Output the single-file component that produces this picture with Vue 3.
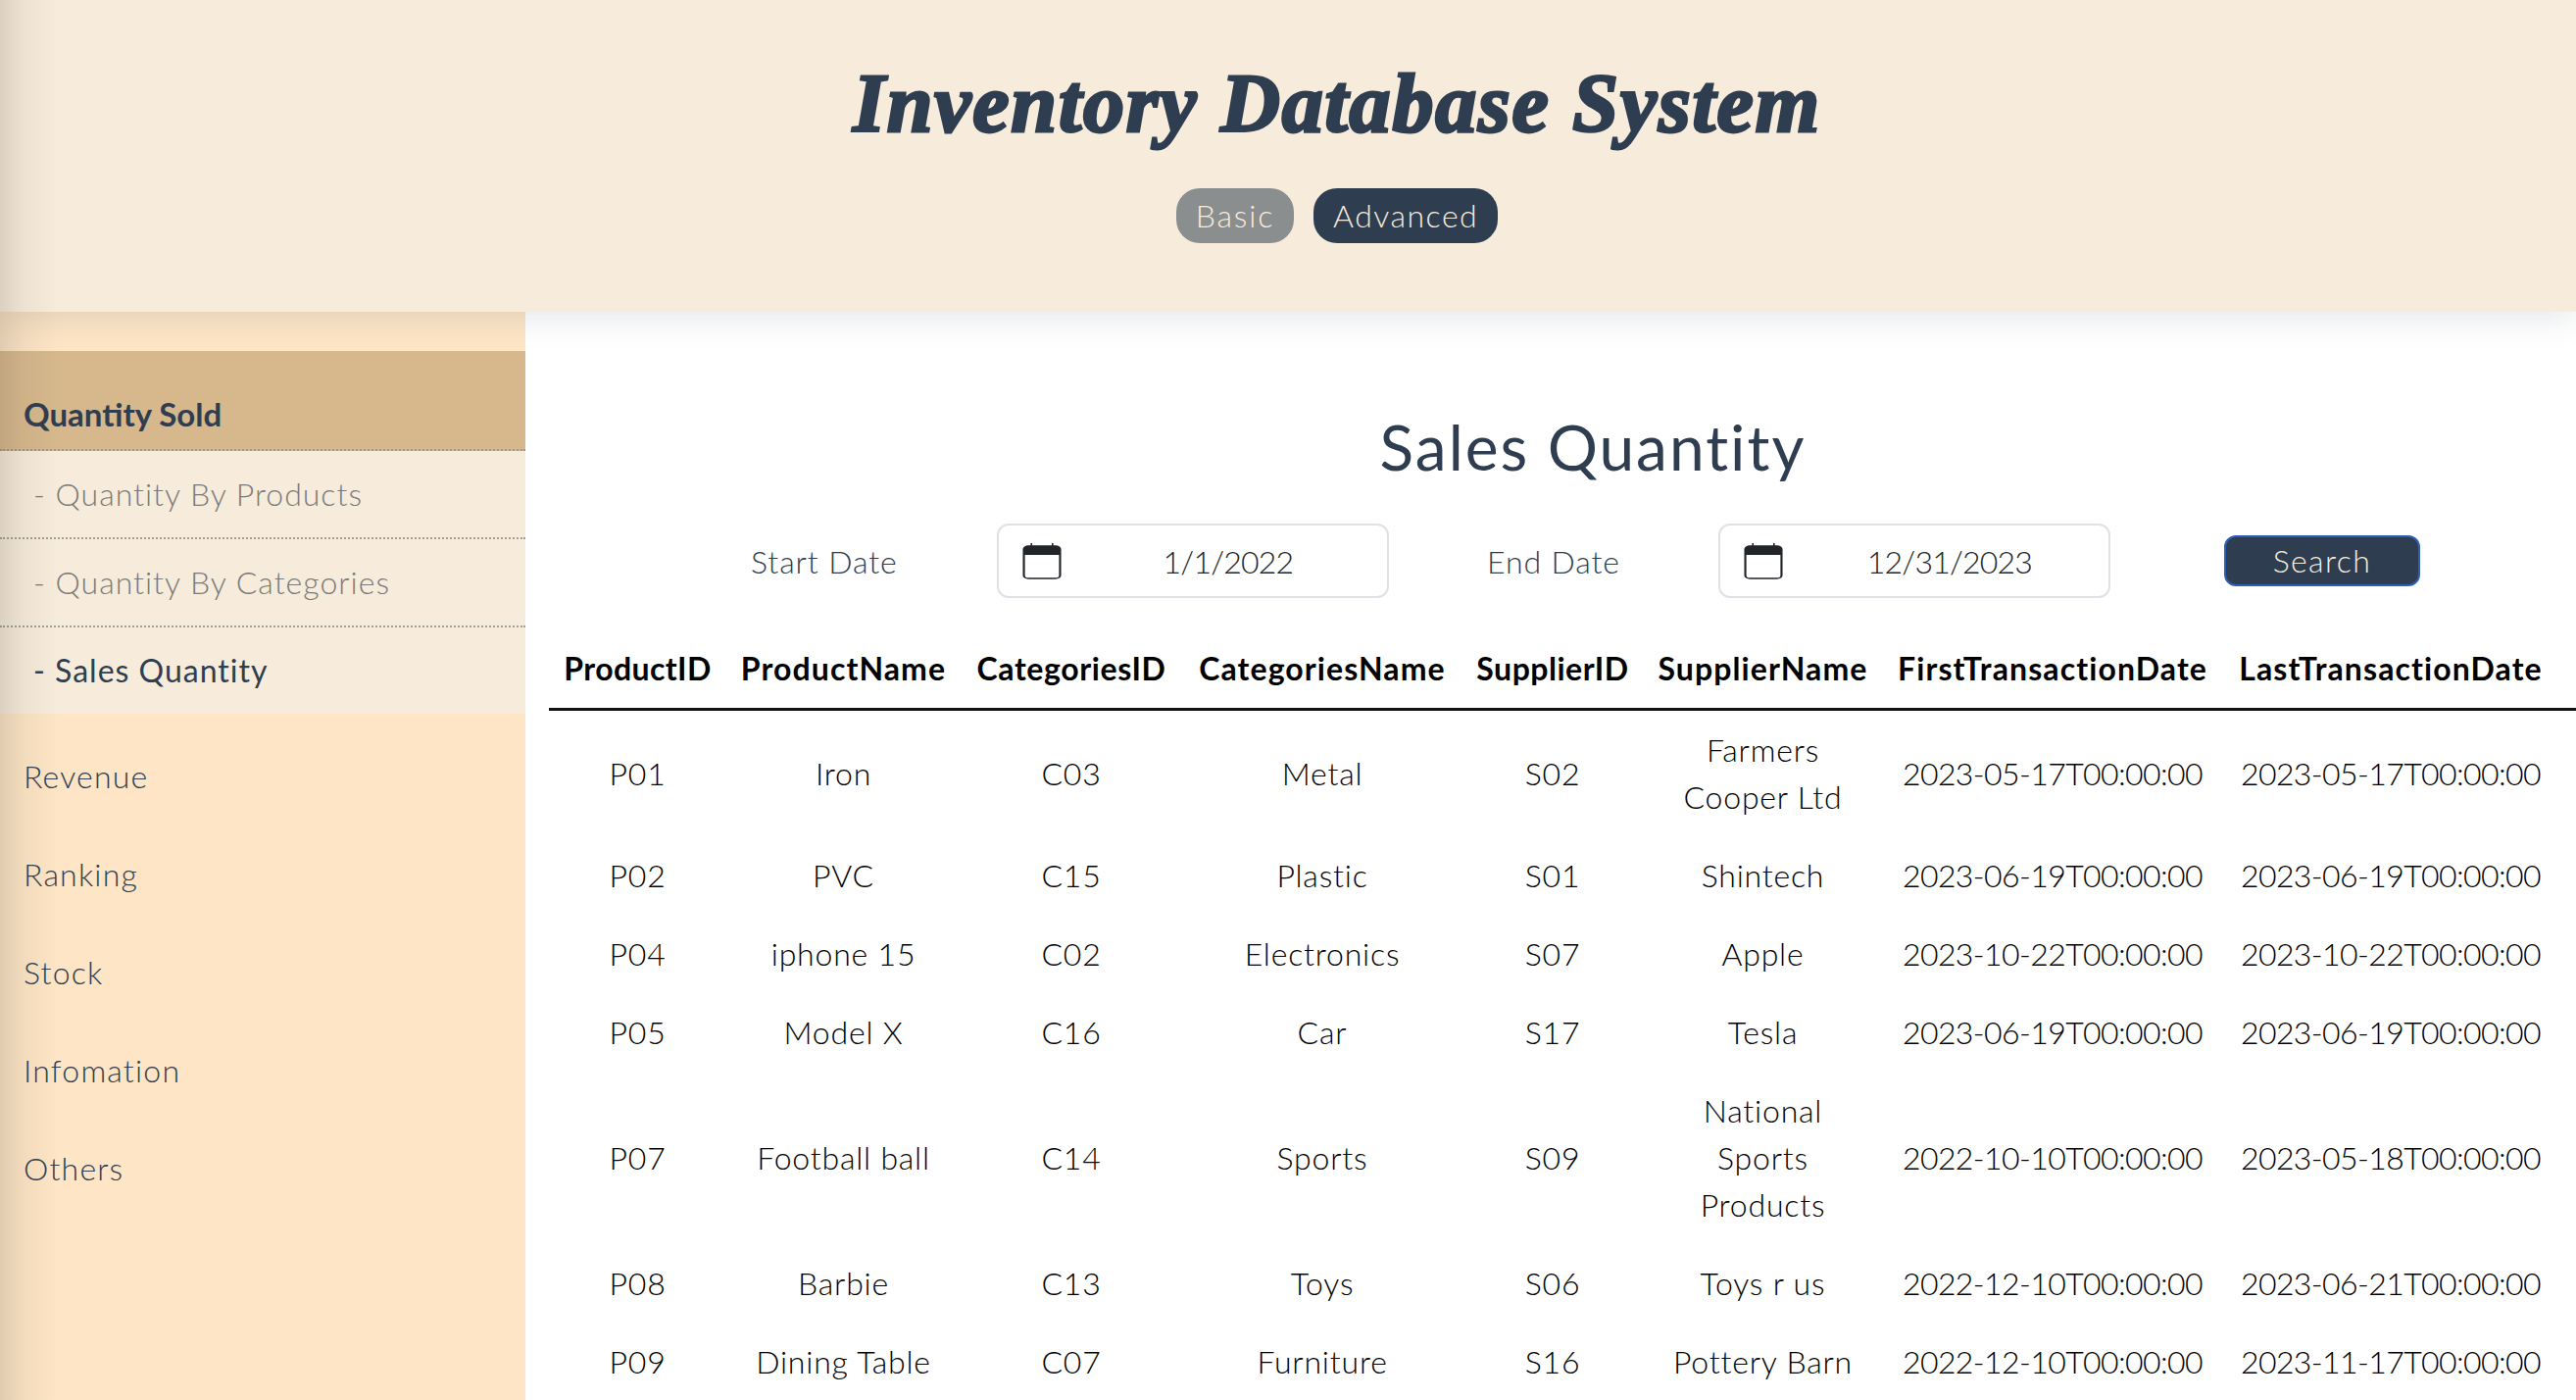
<script setup>
const subItems = [
  { label: '- Quantity By Products', on: false },
  { label: '- Quantity By Categories', on: false },
  { label: '- Sales Quantity', on: true },
]
const navAfter = ['Revenue', 'Ranking', 'Stock', 'Infomation', 'Others']
const cols = ['ProductID', 'ProductName', 'CategoriesID', 'CategoriesName', 'SupplierID', 'SupplierName', 'FirstTransactionDate', 'LastTransactionDate']
const rows = [
  ['P01', 'Iron', 'C03', 'Metal', 'S02', 'Farmers Cooper Ltd', '2023-05-17T00:00:00', '2023-05-17T00:00:00'],
  ['P02', 'PVC', 'C15', 'Plastic', 'S01', 'Shintech', '2023-06-19T00:00:00', '2023-06-19T00:00:00'],
  ['P04', 'iphone 15', 'C02', 'Electronics', 'S07', 'Apple', '2023-10-22T00:00:00', '2023-10-22T00:00:00'],
  ['P05', 'Model X', 'C16', 'Car', 'S17', 'Tesla', '2023-06-19T00:00:00', '2023-06-19T00:00:00'],
  ['P07', 'Football ball', 'C14', 'Sports', 'S09', 'National Sports Products', '2022-10-10T00:00:00', '2023-05-18T00:00:00'],
  ['P08', 'Barbie', 'C13', 'Toys', 'S06', 'Toys r us', '2022-12-10T00:00:00', '2023-06-21T00:00:00'],
  ['P09', 'Dining Table', 'C07', 'Furniture', 'S16', 'Pottery Barn', '2022-12-10T00:00:00', '2023-11-17T00:00:00'],
]
</script>

<template>
  <div class="page">
    <header class="top">
      <h1 class="brand">Inventory Database System</h1>
      <div class="modes">
        <button class="mode off">Basic</button>
        <button class="mode on">Advanced</button>
      </div>
    </header>
    <div class="body">
      <aside class="side">
        <div class="group-head">Quantity Sold</div>
        <div v-for="s in subItems" :key="s.label" class="sub" :class="{ on: s.on }">{{ s.label }}</div>
        <div v-for="n in navAfter" :key="n" class="nav">{{ n }}</div>
      </aside>
      <main class="main">
        <h2 class="heading">Sales Quantity</h2>
        <div class="filters">
          <span class="flabel first">Start Date</span>
          <div class="date">
            <svg class="cal" viewBox="0 0 26 40" width="40" height="40" preserveAspectRatio="none"><path d="M1 8a3 3 0 0 1 3-3h18a3 3 0 0 1 3 3v6H1z" fill="#212529"/><path d="M6 5V2M20 5V2" stroke="#212529" stroke-width="1"/><rect x="1" y="5" width="24" height="33" rx="3" fill="none" stroke="#212529" stroke-width="1.4"/></svg>
            <span class="dval">1/1/2022</span>
          </div>
          <span class="flabel second">End Date</span>
          <div class="date">
            <svg class="cal" viewBox="0 0 26 40" width="40" height="40" preserveAspectRatio="none"><path d="M1 8a3 3 0 0 1 3-3h18a3 3 0 0 1 3 3v6H1z" fill="#212529"/><path d="M6 5V2M20 5V2" stroke="#212529" stroke-width="1"/><rect x="1" y="5" width="24" height="33" rx="3" fill="none" stroke="#212529" stroke-width="1.4"/></svg>
            <span class="dval">12/31/2023</span>
          </div>
          <button class="search">Search</button>
        </div>
        <table class="grid">
          <thead>
            <tr><th v-for="c in cols" :key="c">{{ c }}</th></tr>
          </thead>
          <tbody>
            <tr v-for="r in rows" :key="r[0]">
              <td v-for="(v, i) in r" :key="i">{{ v }}</td>
            </tr>
          </tbody>
        </table>
      </main>
    </div>
    <div class="edge"></div>
  </div>
</template>

<style>
html, body { margin: 0; overflow: hidden; }
</style>

<style scoped>
.page {
  position: relative;
  width: 2628px;
  height: 1428px;
  overflow: hidden;
  background: #fff;
  font-family: Lato, "Noto Sans", sans-serif;
  color: #2f3d50;
}
.top {
  position: relative;
  z-index: 1;
  height: 318px;
  box-sizing: border-box;
  background: #f7ecdb;
  padding: 54px 0 0 100px;
  box-shadow: 0 6px 32px rgba(47, 61, 80, 0.13);
  clip-path: inset(0 0 -60px 0);
  text-align: center;
}
.brand {
  margin: 0;
  font: italic 700 84px/104px "Liberation Serif", serif;
  letter-spacing: 1.8px;
  color: #2f3d50;
  -webkit-text-stroke: 3px #2f3d50;
}
.modes {
  display: flex;
  justify-content: center;
  gap: 20px;
  margin-top: 34px;
}
.mode {
  height: 56px;
  border: 0;
  border-radius: 24px;
  padding: 0 20px;
  font: 300 32px/56px Lato, sans-serif;
  color: #f7ecdb;
}
.mode.off { background: #8b8e8f; letter-spacing: 1.8px; }
.mode.on { background: #2f3d50; letter-spacing: 1.5px; }
.body {
  display: flex;
  height: 1110px;
}
.side {
  width: 536px;
  flex: none;
  background: #fde5c5;
  padding-top: 40px;
  box-sizing: border-box;
}
.group-head {
  height: 102px;
  box-sizing: border-box;
  background: #d6b88c;
  padding: 40px 24px 0;
  font: 700 33px/48px Lato, sans-serif;
  border-bottom: 2px dotted #a0988a;
}
.sub {
  height: 90px;
  box-sizing: border-box;
  background: #f7ecdb;
  padding: 20px 34px 0;
  font: 300 32px/48px Lato, sans-serif;
  color: #7a7a7a;
  border-bottom: 2px dotted #a0a09a;
  letter-spacing: 1px;
}
.sub.on { color: #2f3d50; border-bottom: 0; height: 88px; font-weight: 400; }
.nav {
  height: 100px;
  box-sizing: border-box;
  padding: 40px 24px 0;
  font: 300 32px/48px Lato, sans-serif;
  color: #2f3d50;
  letter-spacing: 1.2px;
}
.main {
  flex: 1;
  min-width: 0;
  padding-left: 24px;
  box-sizing: border-box;
}
.heading {
  margin: 0;
  padding: 100px 0 0 62px;
  font: 400 64px/76px Lato, sans-serif;
  color: #2f3d50;
  text-align: center;
  letter-spacing: 2px;
}
.filters {
  display: flex;
  align-items: center;
  height: 76px;
  margin-top: 40px;
  font-size: 32px;
}
.flabel {
  font-weight: 300;
  color: #2f3d50;
  text-align: center;
  letter-spacing: 0.9px;
}
.flabel.first { width: 457px; box-sizing: border-box; text-align: left; padding-left: 206px; }
.flabel.second { width: 336px; }
.date {
  width: 400px;
  height: 76px;
  box-sizing: border-box;
  border: 2px solid #dee2e6;
  border-radius: 12px;
  display: flex;
  align-items: center;
  padding-left: 24px;
  background: #fff;
}
.cal { flex: none; }
.dval {
  flex: 1;
  text-align: center;
  font-weight: 300;
  color: #212529;
  padding-left: 8px;
  letter-spacing: -0.8px;
}
.search {
  margin-left: 116px;
  width: 200px;
  height: 52px;
  border: 2px solid #2f5fb5;
  border-radius: 12px;
  background: #2f3d50;
  color: #f7ecdb;
  font: 300 32px/48px Lato, sans-serif;
  letter-spacing: 1.4px;
  padding: 0;
}
.grid {
  margin-top: 48px;
  width: 2068px;
  table-layout: fixed;
  border-collapse: collapse;
  font-size: 32px;
  color: #000;
}
.grid th {
  font-weight: 700;
  line-height: 48px;
  padding: 0 0 16px;
  border-bottom: 3px solid #111;
  text-align: center;
  white-space: nowrap;
  color: #000;
  letter-spacing: 1.1px;
}
.grid td {
  font-weight: 300;
  line-height: 48px;
  padding: 16px 16px;
  text-align: center;
  vertical-align: middle;
  letter-spacing: 0.8px;
}
.grid th:nth-child(1) { width: 181px; letter-spacing: 0.4px; }
.grid th:nth-child(2) { width: 239px; }
.grid th:nth-child(3) { width: 226px; letter-spacing: 0.6px; }
.grid th:nth-child(4) { width: 286px; }
.grid th:nth-child(5) { width: 184px; letter-spacing: 0.5px; }
.grid th:nth-child(6) { width: 245px; }
.grid th:nth-child(7) { width: 346px; }
.grid th:nth-child(8) { width: 344px; padding-right: 17px; }
.grid td:nth-child(7) { padding-left: 0; padding-right: 0; letter-spacing: -0.6px; }
.grid td:nth-child(8) { padding-right: 17px; padding-left: 0; letter-spacing: -0.6px; }
.edge {
  position: absolute;
  z-index: 2;
  left: 0;
  top: 0;
  bottom: 0;
  width: 60px;
  pointer-events: none;
  background: linear-gradient(to right, rgba(80, 70, 60, 0.16), rgba(80, 70, 60, 0.06) 40%, rgba(80, 70, 60, 0));
}
</style>
